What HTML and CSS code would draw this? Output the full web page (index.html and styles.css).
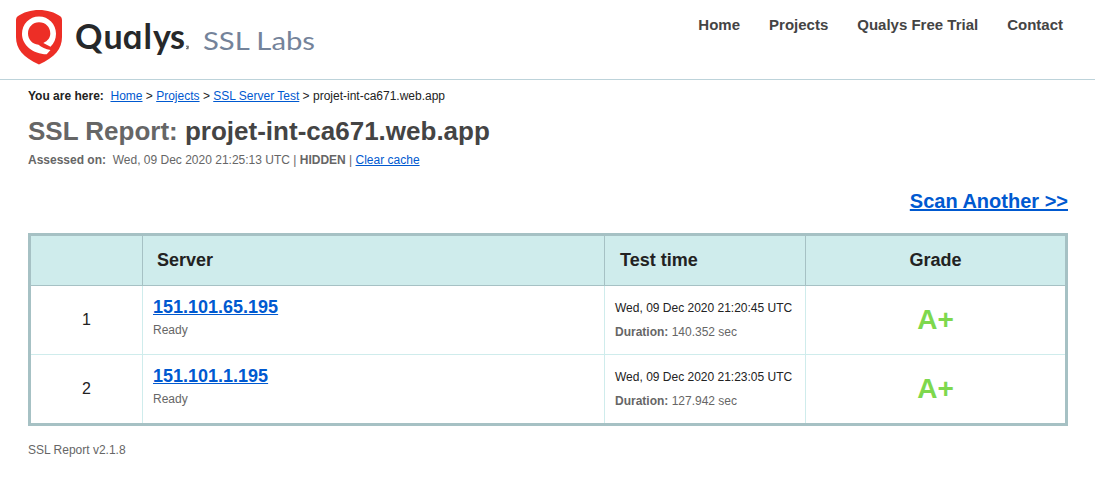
FILE: index.html
```html
<!DOCTYPE html>
<html lang="en">
<head>
<meta charset="utf-8">
<title>SSL Report: projet-int-ca671.web.app</title>
<link rel="stylesheet" href="styles.css">
</head>
<body>
<header class="header">
  <svg class="logo" width="320" height="70" viewBox="0 0 320 70" role="img" aria-label="Qualys SSL Labs">
    <path class="shield" d="M39 10C47 10 55 12.300 60.300 16.300Q62 17.500 62 20V37C62 49 55 57 39 64.500C23 57 16 49 16 37V20Q16 17.500 17.700 16.300C23 12.300 31 10 39 10Z"/>
    <path class="ring" d="M50.500 46.800C54 43.500 56 39 56 33.800C56 24 48.500 16.500 39 16.500C29.500 16.500 22 24 22 34C22 45 33 54 46.700 54.300L50.500 49.900C45.500 49.300 41.500 47.300 38.500 44.700C32 44.200 28 39 28 33.500C28 27 33 22.300 39 22.300C45.500 22.300 50.300 27 50.300 33.500C50.300 37.500 48 40.800 43.300 43Z"/>
    <text class="brand" x="75 103.500 122.500 143.500 153 170" y="49">Qu<tspan class="round">a</tspan>lys</text>
    <path class="mark" d="M186 46.200H188.500L187.200 47.700H188.800M186 48.700H188.500"/>
    <text class="product" x="203" y="49.500" textLength="112" lengthAdjust="spacingAndGlyphs">SSL Labs</text>
  </svg>
  <nav class="nav">
    <a>Home</a><a>Projects</a><a>Qualys Free Trial</a><a>Contact</a>
  </nav>
</header>
<main class="page">
  <div class="crumbs"><b>You are here:&nbsp;</b> <a class="link">Home</a> &gt; <a class="link">Projects</a> &gt; <a class="link">SSL Server Test</a> &gt; projet-int-ca671.web.app</div>
  <h1 class="title">SSL Report: <span class="host">projet-int-ca671.web.app</span></h1>
  <div class="assessed"><b>Assessed on:&nbsp;</b> Wed, 09 Dec 2020 21:25:13 UTC | <b>HIDDEN</b> | <a class="link">Clear cache</a></div>
  <div class="scan"><a class="link">Scan Another &gt;&gt;</a></div>
  <div class="table">
    <div class="row head"><div class="cell"></div><div class="cell">Server</div><div class="cell tested">Test time</div><div class="cell center">Grade</div></div>
    <div class="row">
      <div class="cell num">1</div>
      <div class="cell server"><a class="link ip">151.101.65.195</a><span class="status">Ready</span></div>
      <div class="cell time"><span>Wed, 09 Dec 2020 21:20:45 UTC</span><span class="muted"><b>Duration:</b> 140.352 sec</span></div>
      <div class="cell grade">A+</div>
    </div>
    <div class="row">
      <div class="cell num">2</div>
      <div class="cell server"><a class="link ip">151.101.1.195</a><span class="status">Ready</span></div>
      <div class="cell time"><span>Wed, 09 Dec 2020 21:23:05 UTC</span><span class="muted"><b>Duration:</b> 127.942 sec</span></div>
      <div class="cell grade">A+</div>
    </div>
  </div>
  <footer class="version">SSL Report v2.1.8</footer>
</main>
</body>
</html>
```
FILE: styles.css
```css
* { box-sizing: border-box; }
body { margin: 0; background: #fff; color: #222; font: 12px/16px "Liberation Sans", Arial, sans-serif; }
.header { height: 80px; border-bottom: 1px solid #bdd3da; display: flex; justify-content: space-between; padding-right: 32px; }
.logo { display: block; }
.shield { fill: #ed2e26; }
.ring { fill: #fff; }
.brand { font: 700 34px Lato, sans-serif; fill: #26282a; }
.round { font: 600 32px Inter, sans-serif; font-feature-settings: "cv11"; }
.product { font: 400 25.500px Lato, sans-serif; fill: #74839a; }
.mark { fill: none; stroke: #55585a; stroke-width: 1; }
.nav { display: flex; gap: 29px; padding-top: 16px; font-size: 15px; line-height: 18px; font-weight: bold; color: #444; }
.page { padding: 8px 27px 0 28px; }
.link { color: #0059d0; text-decoration: underline; }
.crumbs { white-space: pre; }
.title { margin: 11px 0 0; font-size: 26px; line-height: 32px; color: #666; }
.host { color: #444; }
.assessed { margin-top: 5px; color: #666; white-space: pre; }
.scan { margin-top: 21px; text-align: right; font-size: 20px; line-height: 24px; font-weight: bold; }
.table { margin-top: 20px; border: 3px solid #a6c1c4; }
.row { display: grid; grid-template-columns: 111px 462px 201px 1fr; height: 69px; }
.row + .row { border-top: 1px solid #cfecec; }
.cell + .cell { border-left: 1px solid #cfecec; }
.head { height: 49px; background: #cfecec; font-size: 18px; font-weight: bold; line-height: 48px; }
.head + .row { border-top-color: #a6c1c4; }
.head .cell { padding-left: 14px; }
.head .tested { padding-left: 15px; }
.head .cell + .cell { border-left-color: #a6c1c4; }
.head .center { padding: 0; text-align: center; }
.num { display: flex; align-items: center; justify-content: center; font-size: 16px; }
.server { display: flex; flex-direction: column; align-items: flex-start; padding: 11px 10px 0; }
.ip { font-size: 18px; line-height: 20px; font-weight: bold; }
.status { margin-top: 5px; color: #666; }
.time { display: flex; flex-direction: column; gap: 8px; padding: 14px 10px 0; }
.muted { color: #666; }
.grade { display: flex; align-items: center; justify-content: center; font-size: 28px; font-weight: bold; color: #7ed84d; }
.version { margin-top: 16px; color: #666; }
```
